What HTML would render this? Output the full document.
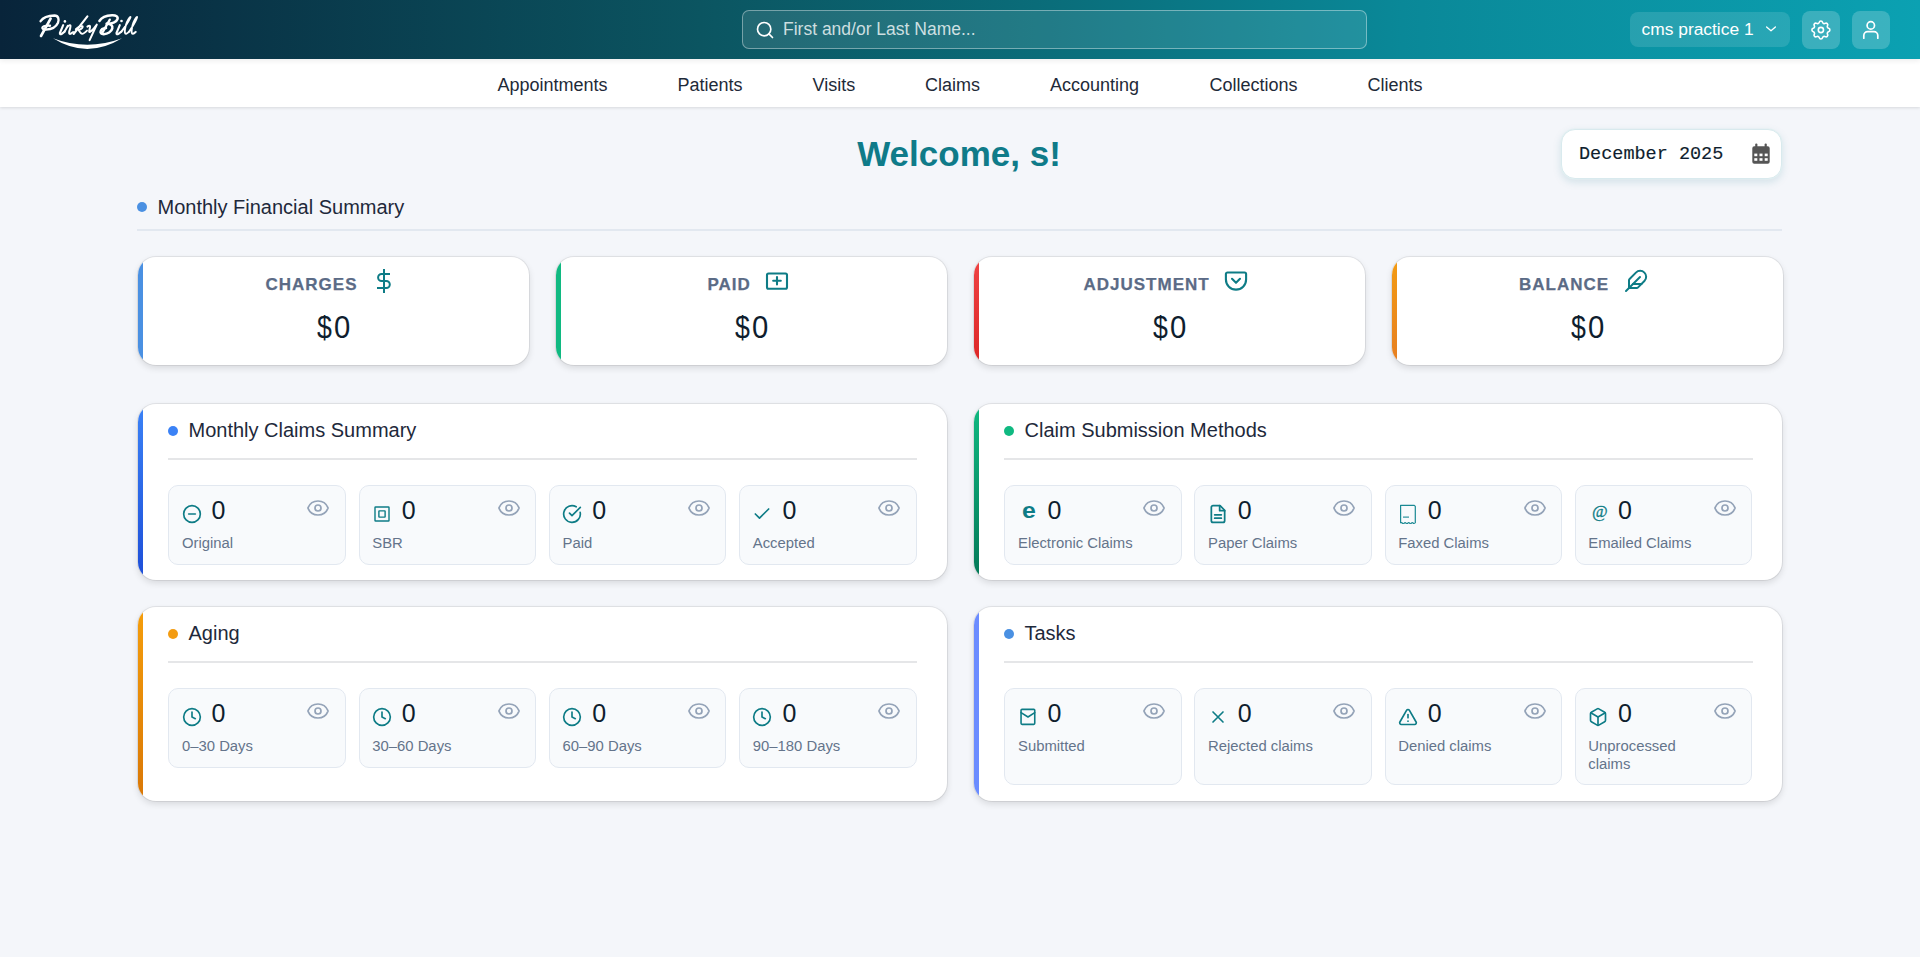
<!DOCTYPE html>
<html><head><meta charset="utf-8">
<style>
*{box-sizing:border-box;margin:0;padding:0}
html,body{width:1920px;height:957px;overflow:hidden}
body{font-family:"Liberation Sans",sans-serif;background:#f4f6fa;color:#1e293b;position:relative}
.abs{position:absolute}
.hdr{position:absolute;z-index:2;box-shadow:0 2px 5px rgba(0,0,0,.07);left:0;top:0;width:1920px;height:59px;background:linear-gradient(90deg,#08243a 0%,#0b5561 36.5%,#0a6d7a 54.7%,#0a8898 73%,#0ba1b2 100%)}
.search{position:absolute;left:742px;top:10px;width:625px;height:38.5px;border:1px solid rgba(255,255,255,.38);border-radius:7px;background:rgba(255,255,255,.1)}
.search .ph{position:absolute;left:40px;top:7.5px;font-size:17.5px;color:rgba(255,255,255,.78)}
.search svg{position:absolute;left:12px;top:9.1px}
.prac{position:absolute;left:1630px;top:12px;width:160px;height:35px;border-radius:8px;background:rgba(255,255,255,.12);color:#fff;font-size:17.4px}
.prac span{position:absolute;left:11.5px;top:7px}
.prac svg{position:absolute;left:135.3px;top:13.3px}
.ib{position:absolute;top:11px;width:38px;height:38px;border-radius:8px;background:rgba(255,255,255,.2)}
.ib svg{position:absolute;left:0;top:0}
.nav{position:absolute;left:0;top:59px;width:1920px;height:48px;background:#fff;box-shadow:0 1px 3px rgba(0,0,0,.12)}
.nav a{position:absolute;top:16px;font-size:18px;color:#1e2a38;text-decoration:none}
.welcome{position:absolute;left:-1px;width:1920px;top:134px;text-align:center;font:bold 35px "Liberation Sans",sans-serif;color:#0f7b89}
.date{position:absolute;left:1561px;top:128.8px;width:220.5px;height:50.5px;background:#fff;border-radius:14px;box-shadow:0 0 0 .6px #e3f0f2,0 3px 8px rgba(15,110,130,.15);border:1px solid #d9eaee}
.date span{position:absolute;left:17px;top:14.2px;font:18.5px "Liberation Mono",monospace;color:#0f1e2e;-webkit-text-stroke:.15px #0f1e2e}
.date svg{position:absolute;left:190px;top:13.5px}
.sech{position:absolute;left:136.8px;top:194px;width:1645.7px;height:37px;border-bottom:2px solid #e2e8f0}
.dot{position:absolute;width:10px;height:10px;border-radius:50%}
.sech .dot{left:0;top:8px;background:#4a90e2}
.sech .t{position:absolute;left:20.7px;top:1.7px;font-size:20px;color:#1e293b}
.fc{position:absolute;top:256.5px;width:391px;height:108.5px;background:#fff;border-radius:18px;overflow:hidden;box-shadow:0 0 0 1px rgba(0,0,0,.07),0 3px 7px rgba(0,0,0,.12)}
.stripe{position:absolute;left:0;top:0;bottom:0;width:5px}
.fc .lab{position:absolute;top:18px;font:bold 17px "Liberation Sans",sans-serif;letter-spacing:1px;color:#5b6b86;white-space:nowrap;-webkit-text-stroke:.25px #5b6b86}
.fc .fi{position:absolute}
.fc .d,.fc .z{position:absolute;top:52px;font-size:32px;line-height:37px;color:#0f1e2e;transform-origin:0 0}
.fc .d{left:179.3px;transform:scaleX(.834)}
.fc .z{left:196px;transform:scaleX(.915)}
.sc{position:absolute;width:809.5px;background:#fff;border-radius:18px;overflow:hidden;box-shadow:0 0 0 1px rgba(0,0,0,.07),0 3px 7px rgba(0,0,0,.12)}
.sc .hd{position:absolute;left:30.5px;top:14px;width:749px;height:42px;border-bottom:2px solid #e5e6e8}
.sc .hd .dot{left:0;top:8px}
.sc .hd .t{position:absolute;left:20.5px;top:1.4px;font-size:20px;color:#1e293b}
.mc{position:absolute;top:81.5px;width:177.6px;height:79px;background:#f8fafc;border:1px solid #e2e8f0;border-radius:10px}
.mc .ic{position:absolute;left:12.3px;top:18px}
.mc .n{position:absolute;left:42.3px;top:10px;font-size:25px;color:#0f1e2e}
.mc .eye{position:absolute;left:137px;top:9.6px}
.mc .l{position:absolute;left:12.7px;top:47.5px;font-size:14.85px;color:#64748b;line-height:18px;width:125px}
</style></head><body>
<div class="hdr">
  <svg class="abs" style="left:0;top:0" width="150" height="59" viewBox="0 0 150 59" fill="none" stroke="#fff" stroke-linecap="round" stroke-linejoin="round">
    <path stroke-width="2.38" d="M40.6 21.2C43 17.6 48 15.6 54.5 15.5C58.5 15.6 59.3 19.5 58 22.8C56.3 26.6 51.5 29.4 46 29.6C43.8 29.7 42.2 29 42.4 27.7C42.7 26.2 46.5 25.6 50 25.7"/>
    <path stroke-width="2.62" d="M50.6 18.6L41 36"/>
    <circle cx="64.9" cy="21.4" r="1.3" fill="#fff" stroke="none"/>
    <path stroke-width="2.12" d="M63.2 25.2L59.9 33C59.6 34.4 60.6 34.6 61.8 33.8L64.6 31.6"/>
    <path stroke-width="2.00" d="M64.6 31.6L67.7 25.9M66.3 28.3C67.8 26.2 69.6 24.8 70.4 25.3C71.1 25.8 70.2 28.2 69.2 31.8C68.8 33.6 69.6 34.5 71.2 33.4L73.2 32"/>
    <path stroke-width="2.12" d="M87.4 16.4L73.6 34"/>
    <path stroke-width="1.88" d="M75.8 29.2C78 27.3 80.6 25.8 82.3 26.2C83.5 26.6 82.2 28.8 78.6 30C79.6 31.5 80.5 33.6 82 33.8C83.2 34 85.4 32.2 87 30.6"/>
    <path stroke-width="2.00" d="M87.4 26.6C88.2 26 89.2 25.4 90 26C90.6 27 88.8 30.8 89.2 31.8C89.8 32.8 92.5 30.5 96.4 25M96.8 24.6L89.6 40.2"/>
    <path stroke-width="2.50" d="M99.4 21C101.5 17.5 106 15.5 112 15.2C116.2 15.1 118.4 16.6 117.4 19.2C116.4 21.8 111.8 23.6 106.8 23.8"/>
    <path stroke-width="2.25" d="M109.8 19.6L102 33.4"/>
    <path stroke-width="2.50" d="M106.8 23.8C110.8 23.9 113 25.4 112.3 28.4C111.5 31.8 107.6 34.1 103.8 34.2C101.2 34.3 100.2 33 100.6 31.4C101 29.6 103.4 28.2 106 28"/>
    <circle cx="121.5" cy="21" r="1.3" fill="#fff" stroke="none"/>
    <path stroke-width="2.12" d="M119.8 25.2L116.5 33C116.2 34.4 117.2 34.6 118.4 33.8L121.4 31.6"/>
    <path stroke-width="1.88" d="M121.4 31.6C124.5 27.5 128.5 21.5 130 18.4C130.8 16.8 130.6 16.6 129.8 17.4C128 19.6 125.8 24.5 125 29C124.6 31.5 124.6 34 126.2 33.8C127.2 33.7 128.2 32.6 128.8 32"/>
    <path stroke-width="1.88" d="M128.8 32C131.6 28 135.2 22 136.6 18.6C137.4 16.8 137.2 16.6 136.4 17.4C134.6 19.6 132.5 24.5 131.8 29C131.4 31.5 131.4 34 133 33.8C134 33.7 135 32.6 135.8 31.8"/>
    <path fill="#fff" stroke="none" d="M53 38.2Q87 59.6 122 38.2Q87 51.2 53 38.2Z"/>
  </svg>
  <div class="search">
    <svg width="20" height="20" viewBox="0 0 24 24" fill="none" stroke="#fff" stroke-width="2" stroke-linecap="round"><circle cx="11" cy="11" r="8"/><path d="m21 21-4.3-4.3"/></svg>
    <span class="ph">First and/or Last Name...</span>
  </div>
  <div class="prac"><span>cms practice 1</span>
    <svg width="12" height="8" viewBox="0 0 12 8" fill="none" stroke="#fff" stroke-width="1.3" stroke-linecap="round" stroke-linejoin="round"><path d="M1.6 1.9l4.4 3.9 4.4-3.9"/></svg>
  </div>
  <div class="ib" style="left:1802px"><svg width="38" height="38" viewBox="0 0 38 38" fill="none" stroke="#fff" stroke-width="1.6" stroke-linecap="round" stroke-linejoin="round"><g transform="translate(6.9 7)"><path d="M10.325 4.317c.426-1.756 2.924-1.756 3.35 0a1.724 1.724 0 002.573 1.066c1.543-.94 3.31.826 2.37 2.37a1.724 1.724 0 001.065 2.572c1.756.426 1.756 2.924 0 3.35a1.724 1.724 0 00-1.066 2.573c.94 1.543-.826 3.31-2.37 2.37a1.724 1.724 0 00-2.572 1.065c-.426 1.756-2.924 1.756-3.35 0a1.724 1.724 0 00-2.573-1.066c-1.543.94-3.31-.826-2.37-2.37a1.724 1.724 0 00-1.065-2.572c-1.756-.426-1.756-2.924 0-3.35a1.724 1.724 0 001.066-2.573c-.94-1.543.826-3.31 2.37-2.37.996.608 2.296.07 2.572-1.065z"/><circle cx="12" cy="12" r="2.6"/></g></svg></div>
  <div class="ib" style="left:1852px"><svg width="38" height="38" viewBox="0 0 38 38" fill="none" stroke="#fff" stroke-width="1.7" stroke-linecap="round" stroke-linejoin="round"><circle cx="18.8" cy="14.4" r="3.7"/><path d="M11.8 27.2V24.5a3.8 3.8 0 0 1 3.8-3.8h6.4a3.8 3.8 0 0 1 3.8 3.8V27.2"/></svg></div>
</div>
<div class="nav">
  <a style="left:497.5px">Appointments</a>
  <a style="left:677.5px">Patients</a>
  <a style="left:812.5px">Visits</a>
  <a style="left:925px">Claims</a>
  <a style="left:1050px">Accounting</a>
  <a style="left:1209.5px">Collections</a>
  <a style="left:1367.5px">Clients</a>
</div>

<div class="welcome">Welcome, s!</div>
<div class="date"><span>December 2025</span><svg width="18" height="21" viewBox="0 0 18 21"><g fill="#555"><rect x="3.2" y="0.5" width="2.2" height="4" rx="1"/><rect x="12.6" y="0.5" width="2.2" height="4" rx="1"/><path d="M0.3 5.3a2 2 0 0 1 2-2h13.4a2 2 0 0 1 2 2V18.7a2 2 0 0 1-2 2H2.3a2 2 0 0 1-2-2z"/></g><g fill="#fff"><rect x="2.3" y="10.6" width="3" height="2.6"/><rect x="7.5" y="10.6" width="3" height="2.6"/><rect x="12.7" y="10.6" width="3" height="2.6"/><rect x="2.3" y="15.2" width="3" height="2.6"/><rect x="7.5" y="15.2" width="3" height="2.6"/><rect x="12.7" y="15.2" width="3" height="2.6"/></g></svg></div>
<div class="sech"><span class="dot"></span><span class="t">Monthly Financial Summary</span></div>
<div class="fc" style="left:137.5px"><div class="stripe" style="background:#4a90e2"></div><div class="lab" style="left:128.0px">CHARGES</div><span class="fi" style="left:237.5px;top:10.5px"><svg width="18" height="28" viewBox="0 0 18 28" fill="none" stroke="#0e7c86" stroke-width="2"><path d="M9 2v24"/><path d="M15 7H6.6a3.5 3.5 0 0 0 0 7h4.7a3.5 3.5 0 0 1 0 7H2"/></svg></span><span class="d">$</span><span class="z">0</span></div>
<div class="fc" style="left:555.5px"><div class="stripe" style="background:#10b981"></div><div class="lab" style="left:152.0px">PAID</div><span class="fi" style="left:208.5px;top:14.5px"><svg width="26" height="21" viewBox="0 0 26 21" fill="none" stroke="#0e7c86" stroke-width="2.1" stroke-linecap="round"><rect x="3" y="2.5" width="20" height="15.2" rx="1.5"/><path d="M13 6v7.5M9.2 9.8h7.6"/></svg></span><span class="d">$</span><span class="z">0</span></div>
<div class="fc" style="left:973.5px"><div class="stripe" style="background:linear-gradient(#ef4444,#dc2626)"></div><div class="lab" style="left:110.0px">ADJUSTMENT</div><span class="fi" style="left:249.5px;top:13.5px"><svg width="26" height="24" viewBox="0 0 26 24" fill="none" stroke="#0e7c86" stroke-width="2.1" stroke-linecap="round" stroke-linejoin="round"><path d="M4.5 2.5h17a1.6 1.6 0 0 1 1.6 1.6v5.4a10.1 10.1 0 0 1-20.2 0V4.1a1.6 1.6 0 0 1 1.6-1.6z"/><path d="m9 8.8 4 4 4-4"/></svg></span><span class="d">$</span><span class="z">0</span></div>
<div class="fc" style="left:1391.5px"><div class="stripe" style="background:linear-gradient(#f39c12,#e67e22)"></div><div class="lab" style="left:127.5px">BALANCE</div><span class="fi" style="left:232.5px;top:12.5px"><svg width="24" height="24" viewBox="0 0 24 24" fill="none" stroke="#0e7c86" stroke-width="2" stroke-linecap="round" stroke-linejoin="round"><path d="M12.67 19a2 2 0 0 0 1.42-.59l6.31-6.33a6 6 0 0 0-8.49-8.49L5.59 9.92A2 2 0 0 0 5 11.33V19z"/><path d="M16 8 2 22"/><path d="M17.5 15H9"/></svg></span><span class="d">$</span><span class="z">0</span></div>
<div class="sc" style="left:137.5px;top:403.5px;height:176.5px;width:809.5px"><div class="stripe" style="background:linear-gradient(#3b82f6,#1d4ed8)"></div>
<div class="hd"><span class="dot" style="background:#3b82f6"></span><span class="t">Monthly Claims Summary</span></div>
<div class="mc" style="left:30.80px;height:79.8px;width:177.47px"><svg class="ic" width="20" height="20" viewBox="0 0 24 24" fill="none" stroke="#0e7c86" stroke-width="2" stroke-linecap="round" stroke-linejoin="round"><circle cx="12" cy="12" r="10"/><path d="M8 12h8"/></svg><span class="n">0</span><svg class="eye" width="24" height="24" viewBox="0 0 24 24" fill="none" stroke="#94a3b8" stroke-width="1.7" stroke-linecap="round" stroke-linejoin="round"><path d="M2.06 12.35a1 1 0 0 1 0-.7 10.75 10.75 0 0 1 19.88 0 1 1 0 0 1 0 .7 10.75 10.75 0 0 1-19.88 0"/><circle cx="12" cy="12" r="3"/></svg><span class="l">Original</span></div>
<div class="mc" style="left:221.07px;height:79.8px;width:177.47px"><svg class="ic" width="20" height="20" viewBox="-0.85 -0.85 25.7 25.7" fill="none" stroke="#0e7c86" stroke-width="1.8" stroke-linecap="round" stroke-linejoin="round"><rect x="3" y="3" width="18" height="18" rx="0.8"/><rect x="8" y="8" width="8" height="8" rx="0.5"/></svg><span class="n">0</span><svg class="eye" width="24" height="24" viewBox="0 0 24 24" fill="none" stroke="#94a3b8" stroke-width="1.7" stroke-linecap="round" stroke-linejoin="round"><path d="M2.06 12.35a1 1 0 0 1 0-.7 10.75 10.75 0 0 1 19.88 0 1 1 0 0 1 0 .7 10.75 10.75 0 0 1-19.88 0"/><circle cx="12" cy="12" r="3"/></svg><span class="l">SBR</span></div>
<div class="mc" style="left:411.34px;height:79.8px;width:177.47px"><svg class="ic" width="20" height="20" viewBox="0 0 24 24" fill="none" stroke="#0e7c86" stroke-width="2" stroke-linecap="round" stroke-linejoin="round"><path d="M21.8 10A10 10 0 1 1 17 3.34"/><path d="m9 11 3 3L22 4"/></svg><span class="n">0</span><svg class="eye" width="24" height="24" viewBox="0 0 24 24" fill="none" stroke="#94a3b8" stroke-width="1.7" stroke-linecap="round" stroke-linejoin="round"><path d="M2.06 12.35a1 1 0 0 1 0-.7 10.75 10.75 0 0 1 19.88 0 1 1 0 0 1 0 .7 10.75 10.75 0 0 1-19.88 0"/><circle cx="12" cy="12" r="3"/></svg><span class="l">Paid</span></div>
<div class="mc" style="left:601.61px;height:79.8px;width:177.47px"><svg class="ic" width="20" height="20" viewBox="0 0 24 24" fill="none" stroke="#0e7c86" stroke-width="2" stroke-linecap="round" stroke-linejoin="round"><path d="M20 6 9 17l-5-5"/></svg><span class="n">0</span><svg class="eye" width="24" height="24" viewBox="0 0 24 24" fill="none" stroke="#94a3b8" stroke-width="1.7" stroke-linecap="round" stroke-linejoin="round"><path d="M2.06 12.35a1 1 0 0 1 0-.7 10.75 10.75 0 0 1 19.88 0 1 1 0 0 1 0 .7 10.75 10.75 0 0 1-19.88 0"/><circle cx="12" cy="12" r="3"/></svg><span class="l">Accepted</span></div>
</div>
<div class="sc" style="left:973.5px;top:403.5px;height:176.5px;width:808.5px"><div class="stripe" style="background:linear-gradient(#10b981,#047857)"></div>
<div class="hd"><span class="dot" style="background:#10b981"></span><span class="t">Claim Submission Methods</span></div>
<div class="mc" style="left:30.80px;height:79.8px;width:177.30px"><span class="ic" style="font:bold 22px 'Liberation Sans',sans-serif;color:#0e7c86;left:16.5px;top:11.5px;transform:scaleX(1.13);transform-origin:0 0">e</span><span class="n">0</span><svg class="eye" width="24" height="24" viewBox="0 0 24 24" fill="none" stroke="#94a3b8" stroke-width="1.7" stroke-linecap="round" stroke-linejoin="round"><path d="M2.06 12.35a1 1 0 0 1 0-.7 10.75 10.75 0 0 1 19.88 0 1 1 0 0 1 0 .7 10.75 10.75 0 0 1-19.88 0"/><circle cx="12" cy="12" r="3"/></svg><span class="l">Electronic Claims</span></div>
<div class="mc" style="left:220.90px;height:79.8px;width:177.30px"><svg class="ic" width="20" height="20" viewBox="0 0 24 24" fill="none" stroke="#0e7c86" stroke-width="2.1" stroke-linecap="round" stroke-linejoin="round"><path d="M14.5 2H6a2 2 0 0 0-2 2v16a2 2 0 0 0 2 2h12a2 2 0 0 0 2-2V7.5L14.5 2z"/><path d="M14 2v6h6"/><path d="M16 13H8"/><path d="M16 17H8"/></svg><span class="n">0</span><svg class="eye" width="24" height="24" viewBox="0 0 24 24" fill="none" stroke="#94a3b8" stroke-width="1.7" stroke-linecap="round" stroke-linejoin="round"><path d="M2.06 12.35a1 1 0 0 1 0-.7 10.75 10.75 0 0 1 19.88 0 1 1 0 0 1 0 .7 10.75 10.75 0 0 1-19.88 0"/><circle cx="12" cy="12" r="3"/></svg><span class="l">Paper Claims</span></div>
<div class="mc" style="left:411.00px;height:79.8px;width:177.30px"><svg class="ic" width="20" height="20" viewBox="0 0 20 20" fill="none" stroke="#1a8993" stroke-width="1.2" stroke-linejoin="round"><path d="M2.6 19.2V1.3H16.3L17.3 2.3V19.2 M2.6 19.2 q.9-1.2 1.8 0 t1.8 0 t1.8 0 t1.8 0 t1.8 0 t1.8 0 t1.8 0 t1.2 -.3"/><path d="M5 13.1h6" stroke-width="1.1"/></svg><span class="n">0</span><svg class="eye" width="24" height="24" viewBox="0 0 24 24" fill="none" stroke="#94a3b8" stroke-width="1.7" stroke-linecap="round" stroke-linejoin="round"><path d="M2.06 12.35a1 1 0 0 1 0-.7 10.75 10.75 0 0 1 19.88 0 1 1 0 0 1 0 .7 10.75 10.75 0 0 1-19.88 0"/><circle cx="12" cy="12" r="3"/></svg><span class="l">Faxed Claims</span></div>
<div class="mc" style="left:601.10px;height:79.8px;width:177.30px"><span class="ic" style="font:17px 'Liberation Serif',serif;color:#0e7c86;left:16.5px;top:15.8px;-webkit-text-stroke:.3px #0e7c86">@</span><span class="n">0</span><svg class="eye" width="24" height="24" viewBox="0 0 24 24" fill="none" stroke="#94a3b8" stroke-width="1.7" stroke-linecap="round" stroke-linejoin="round"><path d="M2.06 12.35a1 1 0 0 1 0-.7 10.75 10.75 0 0 1 19.88 0 1 1 0 0 1 0 .7 10.75 10.75 0 0 1-19.88 0"/><circle cx="12" cy="12" r="3"/></svg><span class="l">Emailed Claims</span></div>
</div>
<div class="sc" style="left:137.5px;top:606.7px;height:194.5px;width:809.5px"><div class="stripe" style="background:linear-gradient(#f59e0b,#d97706)"></div>
<div class="hd"><span class="dot" style="background:#f39c12"></span><span class="t">Aging</span></div>
<div class="mc" style="left:30.80px;height:79.8px;width:177.47px"><svg class="ic" width="20" height="20" viewBox="0 0 24 24" fill="none" stroke="#0e7c86" stroke-width="2" stroke-linecap="round" stroke-linejoin="round"><circle cx="12" cy="12" r="10"/><path d="M12 6v6l4 2"/></svg><span class="n">0</span><svg class="eye" width="24" height="24" viewBox="0 0 24 24" fill="none" stroke="#94a3b8" stroke-width="1.7" stroke-linecap="round" stroke-linejoin="round"><path d="M2.06 12.35a1 1 0 0 1 0-.7 10.75 10.75 0 0 1 19.88 0 1 1 0 0 1 0 .7 10.75 10.75 0 0 1-19.88 0"/><circle cx="12" cy="12" r="3"/></svg><span class="l">0–30 Days</span></div>
<div class="mc" style="left:221.07px;height:79.8px;width:177.47px"><svg class="ic" width="20" height="20" viewBox="0 0 24 24" fill="none" stroke="#0e7c86" stroke-width="2" stroke-linecap="round" stroke-linejoin="round"><circle cx="12" cy="12" r="10"/><path d="M12 6v6l4 2"/></svg><span class="n">0</span><svg class="eye" width="24" height="24" viewBox="0 0 24 24" fill="none" stroke="#94a3b8" stroke-width="1.7" stroke-linecap="round" stroke-linejoin="round"><path d="M2.06 12.35a1 1 0 0 1 0-.7 10.75 10.75 0 0 1 19.88 0 1 1 0 0 1 0 .7 10.75 10.75 0 0 1-19.88 0"/><circle cx="12" cy="12" r="3"/></svg><span class="l">30–60 Days</span></div>
<div class="mc" style="left:411.34px;height:79.8px;width:177.47px"><svg class="ic" width="20" height="20" viewBox="0 0 24 24" fill="none" stroke="#0e7c86" stroke-width="2" stroke-linecap="round" stroke-linejoin="round"><circle cx="12" cy="12" r="10"/><path d="M12 6v6l4 2"/></svg><span class="n">0</span><svg class="eye" width="24" height="24" viewBox="0 0 24 24" fill="none" stroke="#94a3b8" stroke-width="1.7" stroke-linecap="round" stroke-linejoin="round"><path d="M2.06 12.35a1 1 0 0 1 0-.7 10.75 10.75 0 0 1 19.88 0 1 1 0 0 1 0 .7 10.75 10.75 0 0 1-19.88 0"/><circle cx="12" cy="12" r="3"/></svg><span class="l">60–90 Days</span></div>
<div class="mc" style="left:601.61px;height:79.8px;width:177.47px"><svg class="ic" width="20" height="20" viewBox="0 0 24 24" fill="none" stroke="#0e7c86" stroke-width="2" stroke-linecap="round" stroke-linejoin="round"><circle cx="12" cy="12" r="10"/><path d="M12 6v6l4 2"/></svg><span class="n">0</span><svg class="eye" width="24" height="24" viewBox="0 0 24 24" fill="none" stroke="#94a3b8" stroke-width="1.7" stroke-linecap="round" stroke-linejoin="round"><path d="M2.06 12.35a1 1 0 0 1 0-.7 10.75 10.75 0 0 1 19.88 0 1 1 0 0 1 0 .7 10.75 10.75 0 0 1-19.88 0"/><circle cx="12" cy="12" r="3"/></svg><span class="l">90–180 Days</span></div>
</div>
<div class="sc" style="left:973.5px;top:606.7px;height:194.5px;width:808.5px"><div class="stripe" style="background:#6b8cff"></div>
<div class="hd"><span class="dot" style="background:#4a90e2"></span><span class="t">Tasks</span></div>
<div class="mc" style="left:30.80px;height:97px;width:177.30px"><svg class="ic" width="20" height="20" viewBox="0 0 20 20" fill="none" stroke="#0e7c86" stroke-width="1.6" stroke-linejoin="round" stroke-linecap="round"><rect x="3.05" y="2.35" width="13.7" height="15" rx="1"/><path d="M3.05 5.6 10 10l6.75-4.4"/></svg><span class="n">0</span><svg class="eye" width="24" height="24" viewBox="0 0 24 24" fill="none" stroke="#94a3b8" stroke-width="1.7" stroke-linecap="round" stroke-linejoin="round"><path d="M2.06 12.35a1 1 0 0 1 0-.7 10.75 10.75 0 0 1 19.88 0 1 1 0 0 1 0 .7 10.75 10.75 0 0 1-19.88 0"/><circle cx="12" cy="12" r="3"/></svg><span class="l">Submitted</span></div>
<div class="mc" style="left:220.90px;height:97px;width:177.30px"><svg class="ic" width="20" height="20" viewBox="0 0 24 24" fill="none" stroke="#0e7c86" stroke-width="2" stroke-linecap="round" stroke-linejoin="round"><path d="M18 6 6 18M6 6l12 12"/></svg><span class="n">0</span><svg class="eye" width="24" height="24" viewBox="0 0 24 24" fill="none" stroke="#94a3b8" stroke-width="1.7" stroke-linecap="round" stroke-linejoin="round"><path d="M2.06 12.35a1 1 0 0 1 0-.7 10.75 10.75 0 0 1 19.88 0 1 1 0 0 1 0 .7 10.75 10.75 0 0 1-19.88 0"/><circle cx="12" cy="12" r="3"/></svg><span class="l">Rejected claims</span></div>
<div class="mc" style="left:411.00px;height:97px;width:177.30px"><svg class="ic" width="20" height="20" viewBox="0 0 24 24" fill="none" stroke="#0e7c86" stroke-width="2" stroke-linecap="round" stroke-linejoin="round"><path d="m21.73 18-8-14a2 2 0 0 0-3.48 0l-8 14A2 2 0 0 0 4 21h16a2 2 0 0 0 1.73-3"/><path d="M12 9v4"/><path d="M12 17h.01"/></svg><span class="n">0</span><svg class="eye" width="24" height="24" viewBox="0 0 24 24" fill="none" stroke="#94a3b8" stroke-width="1.7" stroke-linecap="round" stroke-linejoin="round"><path d="M2.06 12.35a1 1 0 0 1 0-.7 10.75 10.75 0 0 1 19.88 0 1 1 0 0 1 0 .7 10.75 10.75 0 0 1-19.88 0"/><circle cx="12" cy="12" r="3"/></svg><span class="l">Denied claims</span></div>
<div class="mc" style="left:601.10px;height:97px;width:177.30px"><svg class="ic" width="20" height="20" viewBox="0 0 24 24" fill="none" stroke="#0e7c86" stroke-width="2" stroke-linecap="round" stroke-linejoin="round"><path d="M21 8a2 2 0 0 0-1-1.73l-7-4a2 2 0 0 0-2 0l-7 4A2 2 0 0 0 3 8v8a2 2 0 0 0 1 1.73l7 4a2 2 0 0 0 2 0l7-4A2 2 0 0 0 21 16Z"/><path d="m3.3 7 8.7 5 8.7-5"/><path d="M12 22V12"/></svg><span class="n">0</span><svg class="eye" width="24" height="24" viewBox="0 0 24 24" fill="none" stroke="#94a3b8" stroke-width="1.7" stroke-linecap="round" stroke-linejoin="round"><path d="M2.06 12.35a1 1 0 0 1 0-.7 10.75 10.75 0 0 1 19.88 0 1 1 0 0 1 0 .7 10.75 10.75 0 0 1-19.88 0"/><circle cx="12" cy="12" r="3"/></svg><span class="l">Unprocessed claims</span></div>
</div>
</body></html>
